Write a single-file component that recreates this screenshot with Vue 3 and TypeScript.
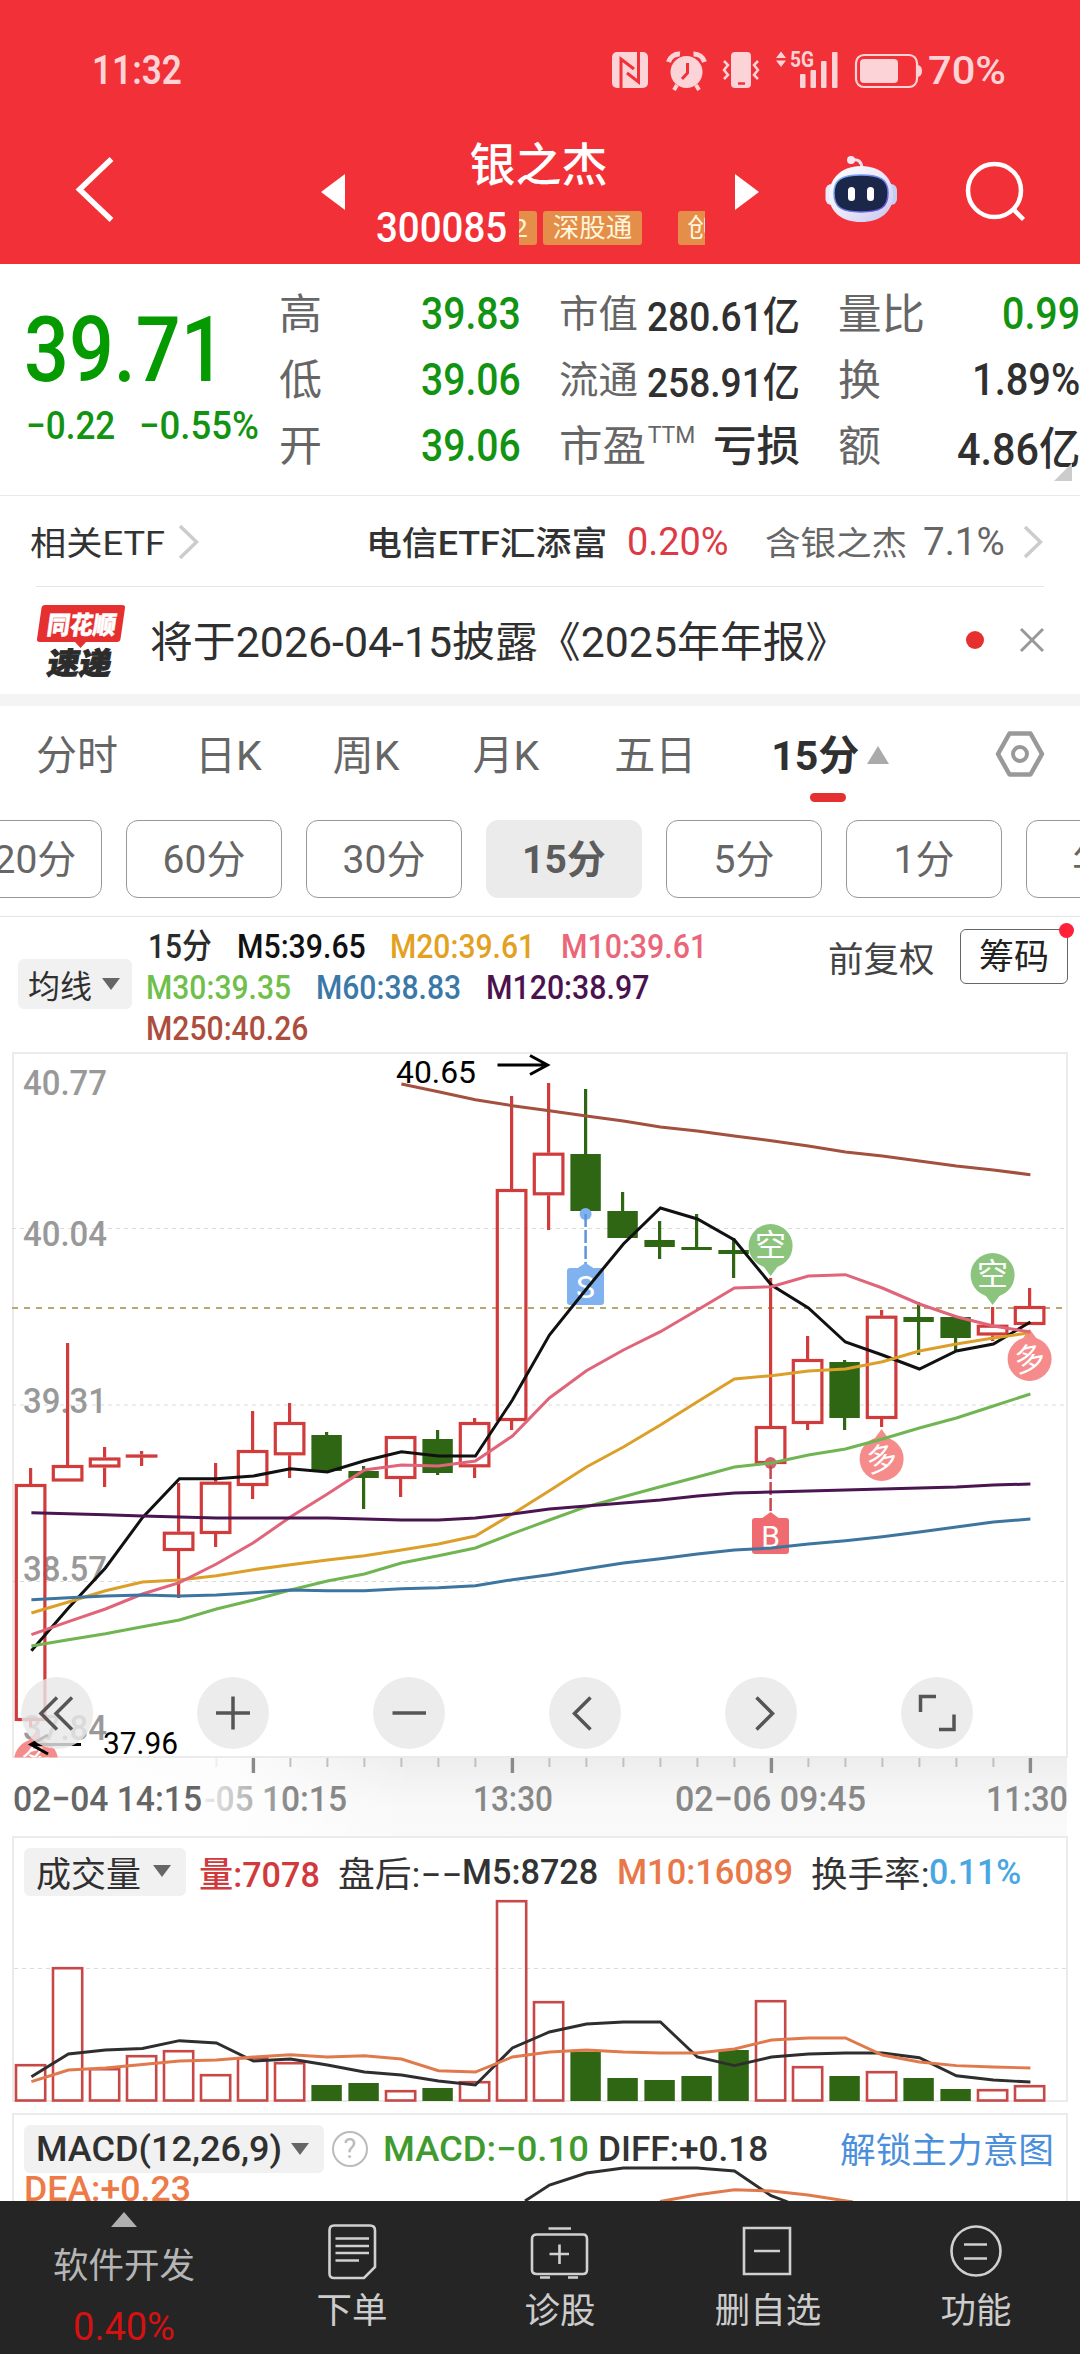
<script setup lang="ts">
import type { Directive } from 'vue'

const vFit: Directive<HTMLElement, number> = {
  mounted(el, binding) {
    const natural = el.offsetWidth
    if (!natural) return
    el.style.transformOrigin = 'left center'
    el.style.transform = `scaleX(${binding.value / natural})`
    el.style.marginRight = `${binding.value - natural}px`
  },
}

type Cell = { k: string; kw: number; sup?: string; v: string; vw: number; cls: string }
const stats: Cell[][] = [
  [
    { k: '高', kw: 43, v: '39.83', vw: 100, cls: 'green' },
    { k: '低', kw: 43, v: '39.06', vw: 100, cls: 'green' },
    { k: '开', kw: 43, v: '39.06', vw: 100, cls: 'green' },
  ],
  [
    { k: '市值', kw: 79, v: '280.61亿', vw: 153, cls: 'small' },
    { k: '流通', kw: 79, v: '258.91亿', vw: 153, cls: 'small' },
    { k: '市盈', kw: 87, sup: 'TTM', v: '亏损', vw: 87, cls: 'cn' },
  ],
  [
    { k: '量比', kw: 87, v: '0.99', vw: 78, cls: 'green' },
    { k: '换', kw: 43, v: '1.89%', vw: 108, cls: '' },
    { k: '额', kw: 43, v: '4.86亿', vw: 123, cls: '' },
  ],
]

const periods = ['120分', '60分', '30分', '15分', '5分', '1分', '年K']

type Legend = { t: string; w: number; c: string }
const legend: Legend[][] = [
  [
    { t: '15分', w: 64, c: '#2b2b2b' },
    { t: 'M5:39.65', w: 129, c: '#111' },
    { t: 'M20:39.61', w: 145, c: '#e3a11f' },
    { t: 'M10:39.61', w: 146, c: '#ea6678' },
  ],
  [
    { t: 'M30:39.35', w: 145, c: '#6fc04b' },
    { t: 'M60:38.83', w: 145, c: '#3a78a8' },
    { t: 'M120:38.97', w: 163, c: '#4a134f' },
  ],
  [{ t: 'M250:40.26', w: 162, c: '#ad4d3d' }],
]

const cx = (i: number): number => 30.6 + 37 * i

// up, high, body top, body bottom, low
type Candle = [boolean, number, number, number, number]
const candles: Candle[] = [
  [true, 1468, 1484, 1721, 1727], [true, 1343, 1465, 1481.5, 1481.5], [true, 1447, 1457.5, 1467.5, 1487],
  [true, 1451, 1454.5, 1457.5, 1466], [true, 1483, 1531.7, 1551, 1598], [true, 1463, 1481.7, 1534, 1547],
  [true, 1411, 1450, 1486, 1499], [true, 1403, 1422, 1455.3, 1478], [false, 1432, 1435, 1471, 1471],
  [false, 1466, 1471, 1478, 1509], [true, 1436, 1436, 1479, 1497], [false, 1430, 1439, 1473, 1475],
  [true, 1418, 1422, 1467.3, 1478], [true, 1096, 1189, 1421, 1430], [true, 1083, 1152.7, 1195.3, 1230],
  [false, 1089, 1154, 1211, 1214], [false, 1192, 1211, 1238, 1238], [false, 1221, 1240, 1247, 1259],
  [false, 1214, 1247, 1250, 1250], [false, 1238, 1250, 1254, 1278], [true, 1278, 1426, 1464, 1464],
  [true, 1336, 1359, 1424, 1430], [false, 1360, 1362, 1418, 1430], [true, 1310, 1315.7, 1419, 1427],
  [false, 1302, 1317, 1322, 1355], [false, 1317, 1317, 1338, 1351], [true, 1307, 1324.7, 1335.5, 1341],
  [true, 1288, 1306, 1325, 1325],
]

const line = (ys: number[], from = 0): string => ys.map((y, i) => `${cx(i + from) + 0.8},${y}`).join(' ')

const averages = [
  { c: '#a3503f', p: line([1084, 1091.7, 1099.7, 1105.7, 1110.7, 1116, 1121, 1127, 1131, 1136, 1140.7, 1146, 1152, 1156, 1161, 1166, 1170, 1174.7], 10) },
  { c: '#111', p: line([1650.7, 1608, 1568, 1517.7, 1478.7, 1478.7, 1476, 1468.7, 1472, 1460.7, 1451.7, 1456, 1456, 1400, 1335, 1289, 1244, 1208, 1219, 1240, 1285, 1308, 1342, 1355, 1369, 1351, 1344, 1322]) },
  { c: '#dc9f2a', p: line([1613, 1602, 1590.7, 1582, 1580, 1575.7, 1569.7, 1564.7, 1560, 1555.7, 1550, 1544, 1536, 1514, 1490.7, 1467, 1447, 1425, 1401.7, 1379, 1375.7, 1371, 1369, 1361.7, 1351, 1344, 1338, 1332.7]) },
  { c: '#e0647a', p: line([1634.7, 1621.7, 1609, 1594, 1582.7, 1564, 1542.7, 1517, 1494, 1470, 1465, 1466, 1461, 1436, 1398, 1370.7, 1350, 1331.7, 1310, 1288, 1286.7, 1276, 1274.7, 1288, 1304, 1316.7, 1326, 1332]) },
  { c: '#70b552', p: line([1646, 1639.7, 1633.7, 1626.7, 1620, 1609, 1600, 1590, 1581, 1574, 1563, 1555.7, 1548, 1533.7, 1520, 1506.7, 1496.7, 1486.7, 1477, 1467, 1463, 1455, 1449, 1439, 1428, 1418, 1406, 1394]) },
  { c: '#3d759f', p: line([1599.7, 1597.7, 1596, 1595, 1596, 1595, 1592.7, 1590, 1590.7, 1590.7, 1588.7, 1587.7, 1585.7, 1579.7, 1574.7, 1568.7, 1563, 1558.7, 1554, 1550, 1548, 1544, 1540.7, 1536.7, 1532, 1527, 1522, 1519]) },
  { c: '#4a1550', p: line([1512.7, 1513.7, 1514.7, 1516, 1517, 1518, 1518, 1518, 1518, 1519, 1520, 1520, 1518, 1514, 1509, 1506, 1503, 1500, 1496, 1493, 1492, 1491, 1490, 1489, 1488, 1487, 1485, 1484]) },
]

const priceLabels = [
  { t: '40.77', y: 1095 }, { t: '40.04', y: 1246 }, { t: '39.31', y: 1413 },
  { t: '38.57', y: 1581 }, { t: '37.84', y: 1740 },
]
const ticks = Array.from({ length: 23 }, (_, n) => n + 5)
const isMajor = (i: number): boolean => (i - 6) % 7 === 0
const timeLabels = [
  { t: '13:30', x: 473, w: 80 }, { t: '02−06 09:45', x: 675, w: 191 }, { t: '11:30', x: 986, w: 82 },
]

const volumes: number[] = [2064, 1967, 2068, 2055, 2050, 2074, 2057, 2062, 2085, 2083, 2090, 2088, 2081, 1900, 2001, 2051.6, 2078, 2080, 2076, 2050, 2000, 2066, 2076, 2071, 2078, 2089, 2089, 2085]
const volumeLines = [
  { c: '#2e2e2e', p: line([2076.8, 2054, 2050, 2048.5, 2040.7, 2043, 2061, 2059, 2065, 2072, 2075, 2081, 2085, 2048, 2032, 2024, 2022, 2022, 2057, 2065.6, 2057, 2054, 2053, 2053, 2057.7, 2075.8, 2080, 2082]) },
  { c: '#e07a4c', p: line([2081.6, 2070, 2068, 2064.5, 2061, 2060, 2057, 2054.7, 2057, 2055.7, 2059, 2070.7, 2072, 2057, 2052, 2050, 2052, 2053, 2053, 2049, 2040, 2038, 2038, 2055, 2062, 2065.6, 2067, 2068]) },
]
const buttons = [57.2, 233, 409, 585, 761, 937]
const shortMarks = [{ x: 770.6, y: 1246 }, { x: 992.6, y: 1275 }]
const longMarks = [{ x: 881.6, y: 1459 }, { x: 1029.6, y: 1359 }, { x: 36, y: 1761 }]
</script>

<template>
  <div class="page">
    <header class="top">
      <div class="status">
        <span class="clock" v-fit="90">11:32</span>
        <svg class="status-icons" viewBox="612 40 312 60" width="312" height="60" fill="#fcd3d6">
          <rect x="612" y="52" width="36" height="36" rx="5" />
          <path d="M621 88V59L634 69M638.500 52V82L627 73" fill="none" stroke="#f23038" stroke-width="3" />
          <circle cx="686.500" cy="72" r="16" />
          <path d="M668.500 62A11 11 0 0 1 680 54M693.500 54A11 11 0 0 1 704.500 62" fill="none" stroke="#fcd3d6" stroke-width="5" />
          <path d="M677 85l-3 5M696 85l3 5" stroke="#fcd3d6" stroke-width="4" />
          <path d="M687.500 63V73L682 79" fill="none" stroke="#f23038" stroke-width="3" />
          <rect x="731" y="52" width="20" height="36" rx="4" />
          <path d="M738 83.500h7" stroke="#f23038" stroke-width="2.500" />
          <path d="M724 61l4 4-4 5 4 5-4 4M758 61l-4 4 4 5-4 5 4 4" fill="none" stroke="#fcd3d6" stroke-width="2.500" />
          <path d="M776 58l5-6.500 5 6.500zM776 60.500h10l-5 6.500z" />
          <text x="790" y="67" font-size="22" font-weight="700" textLength="24" lengthAdjust="spacingAndGlyphs">5G</text>
          <rect x="800" y="74" width="5.500" height="14" rx="1" /><rect x="810.500" y="70" width="5.500" height="18" rx="1" />
          <rect x="821" y="61" width="5.500" height="27" rx="1" /><rect x="832" y="52" width="5.500" height="36" rx="1" />
          <rect x="856" y="55" width="61" height="32" rx="8" fill="none" stroke="#fcd3d6" stroke-width="2.200" />
          <rect x="860" y="59" width="38" height="24" rx="4" /><path d="M918 65q4 1 4 6t-4 6z" />
        </svg>
        <span class="battery" v-fit="78">70%</span>
      </div>
      <div class="nav">
        <svg viewBox="0 140 321 124" width="321" height="124"><path d="M111.500 159L79.500 189.500L111.500 220" fill="none" stroke="#fff" stroke-width="5.500" /></svg>
        <svg viewBox="321 140 24 124" width="24" height="124"><path d="M345 174V210L321 192z" fill="#fff" /></svg>
        <div class="title-block">
          <div class="title">银之杰</div>
          <div class="code-row">
            <span class="code" v-fit="131">300085</span>
            <div class="ticker">
              <span class="tag first">2</span><span class="tag">深股通</span><span class="tag last">创</span>
            </div>
          </div>
        </div>
        <svg viewBox="735 140 24 124" width="24" height="124"><path d="M735 174V210L759 192z" fill="#fff" /></svg>
        <svg viewBox="759 140 321 124" width="321" height="124">
          <defs>
            <linearGradient id="shell" x1="0" y1="0" x2="1" y2="1"><stop offset="0" stop-color="#fff" /><stop offset=".5" stop-color="#ece9fa" /><stop offset="1" stop-color="#c3c6ee" /></linearGradient>
            <linearGradient id="rim" x1="0" y1="0" x2="1" y2="1"><stop offset="0" stop-color="#77b6ff" /><stop offset="1" stop-color="#6a4bd8" /></linearGradient>
          </defs>
          <rect x="825.500" y="184" width="14" height="21" rx="6" fill="#e6eafc" /><rect x="883" y="184" width="14" height="21" rx="6" fill="#c5cdf2" />
          <path d="M852 160q9-2 10 8" fill="none" stroke="#f1dff0" stroke-width="3" /><circle cx="851" cy="160" r="4" fill="#f5e8f4" />
          <path d="M861 166C883 166 893 180 893 195C893 212 880 222 861 222C842 222 829 212 829 195C829 180 840 166 861 166z" fill="url(#shell)" />
          <path d="M861 175C881 175 888 180 888 193C888 207 881 212 861 212C841 212 834 207 834 193C834 180 841 175 861 175z" fill="#1b2748" stroke="url(#rim)" stroke-width="1.500" />
          <rect x="848" y="187" width="7" height="14" rx="3.500" fill="#fff" /><rect x="867" y="187" width="7" height="14" rx="3.500" fill="#fff" />
          <circle cx="994.500" cy="190.500" r="26.500" fill="none" stroke="#fff" stroke-width="4.500" />
          <path d="M1013 209L1023.500 219.500" stroke="#fff" stroke-width="4.500" />
        </svg>
      </div>
    </header>

    <section class="quote">
      <div class="price-block">
        <div class="price"><span v-fit="202">39.71</span></div>
        <div class="change"><span v-fit="89">−0.22</span><span v-fit="120">−0.55%</span></div>
      </div>
      <div v-for="(col, c) in stats" :key="c" class="stat-col">
        <div v-for="cell in col" :key="cell.k" class="stat">
          <span class="key" :class="{ sm: cell.kw === 79 }"><span v-fit="cell.kw">{{ cell.k }}</span><small v-if="cell.sup">{{ cell.sup }}</small></span>
          <span class="val" :class="cell.cls" v-fit="cell.vw">{{ cell.v }}</span>
        </div>
      </div>
      <i class="corner"></i>
    </section>

    <section class="etf">
      <span class="etf-a" v-fit="135">相关ETF</span>
      <svg width="24" height="40" viewBox="0 0 24 40"><path d="M3 4L19.500 20L3 36" fill="none" stroke="#ccc" stroke-width="3.500" /></svg>
      <span class="etf-b" v-fit="241">电信ETF汇添富</span>
      <span class="etf-c" v-fit="102">0.20%</span>
      <span class="etf-d" v-fit="142">含银之杰</span>
      <span class="etf-e" v-fit="82">7.1%</span>
      <svg width="24" height="40" viewBox="0 0 24 40"><path d="M3 5L18.500 20L3 35" fill="none" stroke="#ccc" stroke-width="3.500" /></svg>
    </section>

    <section class="news">
      <svg width="90" height="76" viewBox="36 602 90 76">
        <path d="M45 604H122Q125.500 604 125 607L120.500 638Q120 641 117 641H86L80.500 647L75 641H40Q36.500 641 37 638L41.500 607Q42 604 45 604z" fill="#e62f2f" />
        <g class="brand">
          <text transform="translate(46 632.500) skewX(-8)" font-size="25" fill="#fff" stroke="#fff" stroke-width=".5" textLength="69" lengthAdjust="spacingAndGlyphs">同花顺</text>
          <text transform="translate(46 672.500) skewX(-10)" font-size="30" fill="#2c2c2c" stroke="#2c2c2c" stroke-width="1" textLength="64" lengthAdjust="spacingAndGlyphs">速递</text>
        </g>
      </svg>
      <span class="headline" v-fit="698">将于2026-04-15披露《2025年年报》</span>
      <i class="dot"></i>
      <svg width="26" height="26" viewBox="0 0 26 26"><path d="M2 2L24 24M24 2L2 24" stroke="#999" stroke-width="3" /></svg>
    </section>

    <section class="tabs">
      <span>分时</span><span>日K</span><span>周K</span><span>月K</span><span>五日</span>
      <span class="on">15分<i class="tri-up"></i></span>
      <svg width="50" height="50" viewBox="995 729 50 50">
        <path d="M1009.500 733.500H1030.500L1042 754L1030.500 774.500H1009.500L998 754z" fill="none" stroke="#999" stroke-width="4.500" stroke-linejoin="round" />
        <circle cx="1020" cy="754" r="7" fill="none" stroke="#999" stroke-width="4" />
      </svg>
    </section>
    <section class="periods">
      <span v-for="p in periods" :key="p" class="pill" :class="{ active: p === '15分' }">{{ p }}</span>
    </section>

    <section class="legend">
      <span class="drop ma">均线<i class="tri"></i></span>
      <div class="legend-rows">
        <div v-for="(row, r) in legend" :key="r" class="legend-row">
          <span v-for="l in row" :key="l.t" v-fit="l.w" :style="{ color: l.c }">{{ l.t }}</span>
        </div>
      </div>
      <span class="adjust">前复权</span>
      <span class="chips">筹码<i></i></span>
    </section>

    <svg class="chart" viewBox="0 1052 1080 784" width="1080" height="784">
      <defs>
        <linearGradient id="axis" x1="0" y1="0" x2="0" y2="1"><stop offset="0" stop-color="#ededed" /><stop offset=".6" stop-color="#f8f8f8" /><stop offset="1" stop-color="#fafafa" /></linearGradient>
        <linearGradient id="veil" x1="0" y1="0" x2="1" y2="0"><stop offset="0" stop-color="#fff" /><stop offset=".55" stop-color="#fff" stop-opacity=".85" /><stop offset="1" stop-color="#fff" stop-opacity="0" /></linearGradient>
        <linearGradient id="fade" gradientUnits="userSpaceOnUse" x1="200" y1="0" x2="290" y2="0"><stop offset="0" stop-color="#f0f0f0" /><stop offset="1" stop-color="#888" /></linearGradient>
        <clipPath id="plot"><rect x="12" y="1052" width="1056" height="705.500" /></clipPath>
      </defs>
      <rect x="12" y="1757" width="1055" height="79" fill="url(#axis)" />
      <rect x="12" y="1757" width="400" height="79" fill="url(#veil)" />
      <rect x="13" y="1053" width="1054" height="704" fill="none" stroke="#ebebeb" stroke-width="2" />
      <path d="M12 1228.500H1066M12 1405H1066M12 1581.500H1066" stroke="#dcdcdc" stroke-width="1.200" stroke-dasharray="4 4" />
      <path d="M12 1308H1066" stroke="#b8a873" stroke-width="2" stroke-dasharray="6 6" />
      <g font-size="35.500" font-weight="500" fill="#999">
        <text v-for="l in priceLabels" :key="l.t" x="23" :y="l.y" textLength="84" lengthAdjust="spacingAndGlyphs">{{ l.t }}</text>
      </g>
      <path v-for="(k, i) in candles" :key="i" :d="`M${cx(i)} ${k[1]}V${k[2]}M${cx(i)} ${k[3]}V${k[4]}`" :stroke="k[0] ? '#d13b3b' : '#2f6613'" stroke-width="3.200" />
      <template v-for="(k, i) in candles" :key="i">
        <rect v-if="k[0]" :x="cx(i) - 14.300" :y="k[2] + 1.500" width="28.600" :height="Math.max(k[3] - k[2] - 3, 0.1)" fill="none" stroke="#d13b3b" stroke-width="3.200" />
        <rect v-else :x="cx(i) - 15.200" :y="k[2]" width="30.400" :height="k[3] - k[2]" fill="#2f6613" />
      </template>
      <g fill="#7fb2ef">
        <circle cx="585.600" cy="1214" r="6" /><path d="M585.600 1214V1266" stroke="#5c95dc" stroke-width="2.500" stroke-dasharray="13 3" />
        <path d="M576 1269L585.600 1263L595 1269z" /><rect x="567" y="1268" width="37" height="37" rx="3" />
        <text x="585.600" y="1298" text-anchor="middle" font-size="32" fill="#fff">S</text>
      </g>
      <g fill="#ef6b70">
        <circle cx="770.600" cy="1463" r="6" fill="#d8626a" /><path d="M770.600 1466V1516" stroke="#c9444c" stroke-width="2.500" stroke-dasharray="13 3" />
        <path d="M761 1519L770.600 1512L780 1519z" /><rect x="752" y="1518" width="37" height="36" rx="3" />
        <text x="770.600" y="1547" text-anchor="middle" font-size="30" fill="#fff">B</text>
      </g>
      <g clip-path="url(#plot)">
        <g v-for="m in shortMarks" :key="m.x" fill="#8cc47e">
          <circle :cx="m.x" :cy="m.y" r="22" /><path :d="`M${m.x - 9} ${m.y + 18}L${m.x} ${m.y + 30}L${m.x + 9} ${m.y + 18}z`" />
          <text :x="m.x" :y="m.y + 10" text-anchor="middle" font-size="31" fill="#fff">空</text>
        </g>
        <g v-for="m in longMarks" :key="m.x" fill="#f58b8b">
          <circle :cx="m.x" :cy="m.y" r="22" /><path :d="`M${m.x - 8} ${m.y - 19}L${m.x} ${m.y - 30}L${m.x + 8} ${m.y - 19}z`" />
          <text :transform="`translate(${m.x} ${m.y}) rotate(-12)`" y="11" text-anchor="middle" font-size="31" fill="#fff">多</text>
        </g>
      </g>
      <polyline v-for="a in averages" :key="a.c" :points="a.p" fill="none" :stroke="a.c" stroke-width="3" />
      <g font-size="31" fill="#000">
        <text x="396" y="1083" textLength="80" lengthAdjust="spacingAndGlyphs">40.65</text>
        <path d="M497.500 1065H547M530 1055.500L547.500 1065L530 1074.500" fill="none" stroke="#000" stroke-width="3" />
        <text x="103" y="1754" textLength="75" lengthAdjust="spacingAndGlyphs">37.96</text>
        <path d="M81 1744.500H31M48 1754L31 1744.500L48 1735" fill="none" stroke="#000" stroke-width="3" />
      </g>
      <circle v-for="x in buttons" :key="x" :cx="x" cy="1713" r="36" fill="#e8e8e8" fill-opacity=".82" />
      <path d="M57 1697.500L41 1713.500L57 1729.500M72 1697.500L56 1713.500L72 1729.500M216 1713H250M233 1696.500V1729.500M392.500 1713H426M590.500 1697.500L574.500 1713.500L590.500 1729.500M756.500 1697.500L772.500 1713.500L756.500 1729.500M936 1696.500H920.500V1712M939 1729.500H954V1714.500" fill="none" stroke="#555" stroke-width="3.500" />
      <rect v-for="i in ticks" :key="i" :x="cx(i) + 0.800 - (isMajor(i) ? 1.700 : 1)" y="1758" :width="isMajor(i) ? 3.400 : 2" :height="isMajor(i) ? 15 : 9" :fill="isMajor(i) ? '#8a8a8a' : i === 5 ? '#eee' : '#c0c0c0'" />
      <g font-size="35.500" font-weight="500">
        <text x="13" y="1811" fill="#666" textLength="189" lengthAdjust="spacingAndGlyphs">02−04 14:15</text>
        <text x="204" y="1811" fill="url(#fade)" textLength="143" lengthAdjust="spacingAndGlyphs">-05 10:15</text>
        <text v-for="l in timeLabels" :key="l.t" :x="l.x" y="1811" fill="#888" :textLength="l.w" lengthAdjust="spacingAndGlyphs">{{ l.t }}</text>
      </g>
    </svg>

    <section class="panel volume">
      <div class="panel-head">
        <span class="drop">成交量<i class="tri"></i></span>
        <span class="v-a" v-fit="121">量:7078</span>
        <span class="v-b" v-fit="125">盘后:−−</span>
        <span v-fit="136">M5:8728</span>
        <span class="v-c" v-fit="176">M10:16089</span>
        <span class="v-d" v-fit="118">换手率:</span>
        <span class="v-e" v-fit="92">0.11%</span>
      </div>
      <svg viewBox="14 1898 1052 202" width="1052" height="202">
        <path d="M14 1968.500H1066" stroke="#dcdcdc" stroke-width="1.200" stroke-dasharray="4 4" />
        <template v-for="(top, i) in volumes" :key="i">
          <rect v-if="candles[i][0]" :x="cx(i) - 14.600" :y="top + 1.200" width="29.200" :height="2099.300 - top" fill="none" stroke="#c84848" stroke-width="2.600" />
          <rect v-else :x="cx(i) - 15.200" :y="top" width="30.400" :height="2101 - top" fill="#2f6613" />
        </template>
        <polyline v-for="l in volumeLines" :key="l.c" :points="l.p" fill="none" :stroke="l.c" stroke-width="2.900" />
      </svg>
    </section>

    <section class="panel macd">
      <svg class="macd-lines" viewBox="14 2115 1052 86" width="1052" height="86">
        <path d="M525 2201L549.500 2185L586.500 2173L623.500 2168H697L734.500 2171L771 2195.700L788 2202" fill="none" stroke="#2e2e2e" stroke-width="2.900" />
        <path d="M660 2201.500L697.500 2194.700L734.500 2189.800L771.500 2191L808 2195L853 2202" fill="none" stroke="#e07a4c" stroke-width="2.900" />
      </svg>
      <div class="panel-head">
        <span class="drop"><span v-fit="246">MACD(12,26,9)</span><i class="tri"></i></span>
        <i class="help">?</i>
        <span class="m-a" v-fit="206">MACD:−0.10</span>
        <span class="m-b" v-fit="170">DIFF:+0.18</span>
        <span class="m-c" v-fit="214">解锁主力意图</span>
      </div>
      <div class="dea"><span v-fit="167">DEA:+0.23</span></div>
    </section>

    <footer class="bar">
      <div class="sector">
        <i class="tri-up light"></i>
        <span class="name">软件开发</span>
        <span class="pct">0.40%</span>
      </div>
      <div class="item">
        <svg width="60" height="60" viewBox="322 2221 60 60"><path d="M334 2225.500H370Q375 2225.500 375 2230.500V2267L364 2278H334Q329.500 2278 329.500 2273.500V2230.500Q329.500 2225.500 334 2225.500zM335.500 2238.500H369M335.500 2246H369M335.500 2253H369M335.500 2260.500H359" /></svg>
        <span>下单</span>
      </div>
      <div class="item">
        <svg width="60" height="60" viewBox="530 2221 60 60"><path d="M548.500 2228.500H571M537 2234.500H583Q587 2234.500 587 2239V2270Q587 2274 583 2274H537Q532 2274 532 2270V2239Q532 2234.500 537 2234.500zM549.500 2254H569M559.500 2244.500V2264M540 2277.500H550M568 2277.500H578" /></svg>
        <span>诊股</span>
      </div>
      <div class="item">
        <svg width="60" height="60" viewBox="738 2221 60 60"><path d="M744 2228H790V2274H744zM754 2251H780" /></svg>
        <span>删自选</span>
      </div>
      <div class="item">
        <svg width="60" height="60" viewBox="946 2221 60 60"><circle cx="976" cy="2251" r="24.500" /><path d="M964 2244.500H987M964 2258.500H987" /></svg>
        <span>功能</span>
      </div>
    </footer>
  </div>
</template>

<style>
body { background: #fff; }
</style>

<style scoped>
.page { width: 1080px; height: 2354px; overflow: hidden; display: flex; flex-direction: column; background: #fff; color: #333; font-family: Roboto, "Noto Sans CJK SC", sans-serif; }
.page > * { flex: none; box-sizing: border-box; }
span { display: inline-block; white-space: nowrap; flex: none; }
svg { display: block; flex: none; }
i { font-style: normal; }

.top { height: 264px; background: #f23038; color: #fff; }
.status { height: 140px; display: flex; align-items: center; color: #fcd3d6; font-weight: 500; }
.clock { margin-left: 92px; font-size: 41px; font-weight: 600; }
.status-icons { margin-left: 430px; }
.battery { margin-left: 4px; font-size: 39px; padding-top: 1px; }
.nav { height: 124px; display: flex; }
.title-block { width: 390px; }
.title { height: 48px; line-height: 50px; font-size: 46px; font-weight: 500; text-align: center; padding-right: 3px; }
.code-row { margin-top: 23px; height: 34px; display: flex; align-items: center; padding-left: 31px; }
.code { font-size: 42px; font-weight: 500; line-height: 36px; }
.ticker { margin-left: 12px; width: 186px; height: 34px; overflow: hidden; display: flex; }
.tag { box-sizing: border-box; height: 34px; line-height: 33px; padding: 0 9.500px; border-radius: 3px; background: #e48e4a; color: #fff6dc; font-size: 26.500px; }
.tag.first { width: 60px; margin-left: -42px; margin-right: 6px; text-align: right; }
.tag.last { margin-left: 36px; width: 90px; }

.quote { position: relative; height: 232px; border-bottom: 1.500px solid #e9e9e9; display: flex; gap: 38px; }
.price-block { width: 241px; padding: 50px 0 0 24px; box-sizing: border-box; color: #059a00; font-weight: 500; }
.price { font-size: 90px; line-height: 74px; }
.change { display: flex; gap: 24px; font-size: 39px; line-height: 40px; margin-top: 18px; padding-left: 2px; color: #129312; }
.stat-col { width: 242px; padding-top: 16px; }
.stat { height: 66px; display: flex; justify-content: space-between; align-items: center; }
.key { font-size: 42px; color: #666; display: flex; align-items: center; height: 66px; margin-top: -5px; }
.key.sm { font-size: 38px; }
.key small { font-size: 23px; margin: -15px 0 0 2px; }
.val { font-size: 45px; font-weight: 500; color: #303030; }
.val.small { font-size: 41px; }
.val.cn { font-size: 42px; margin-top: -5px; }
.val.green { color: #129312; }
.corner { position: absolute; right: 8px; bottom: 14px; border: 9px solid transparent; border-right-color: #ccc; border-bottom-color: #ccc; }

.etf { height: 91px; display: flex; align-items: center; font-size: 33px; padding: 0 0 0 30px; position: relative; }
.etf::after { content: ""; position: absolute; left: 36px; right: 36px; bottom: 0; height: 1px; background: #e6e6e6; }
.etf svg:first-of-type { margin-left: 12px; }
.etf-a, .etf-b, .etf-d { margin-top: -2px; }
.etf-b { margin-left: 165px; font-weight: 500; }
.etf-c { margin-left: 20px; font-size: 39px; color: #dc3a46; }
.etf-d { margin-left: 36px; color: #666; }
.etf-e { margin-left: 16px; font-size: 39px; color: #666; }
.etf svg:last-of-type { margin-left: 17px; }

.news { height: 119px; border-bottom: 12px solid #f4f4f4; display: flex; align-items: center; padding-left: 36px; }
.brand { font-weight: 900; font-family: "Noto Sans CJK SC", sans-serif; }
.headline { margin-left: 24px; margin-top: -5px; font-size: 42px; color: #303030; }
.dot { width: 18px; height: 18px; border-radius: 50%; background: #e62f2f; margin-left: 118px; margin-top: -1px; }
.news > svg:last-child { margin-left: 35px; margin-top: -2px; }

.tabs { height: 114px; display: flex; color: #666; font-size: 41px; line-height: 101px; padding-left: 36px; }
.tabs > span:nth-child(2) { margin-left: 77px; }
.tabs > span:nth-child(3) { margin-left: 71px; }
.tabs > span:nth-child(4) { margin-left: 73px; }
.tabs > span:nth-child(5) { margin-left: 75px; }
.tabs .on { position: relative; color: #303030; font-weight: 700; margin-left: 75px; width: 118px; display: flex; align-items: center; height: 101px; }
.tabs .on::after { content: ""; position: absolute; left: 39px; top: 87px; width: 36px; height: 9px; border-radius: 5px; background: #e62f2f; }
.tri-up { border: 11px solid transparent; border-bottom: 18px solid #aaa; border-top: 0; margin-left: 8px; margin-top: -4px; }
.tabs svg { margin: 23px 35px 0 auto; }
.periods { height: 97px; border-bottom: 1.500px solid #e6e6e6; display: flex; gap: 24px; margin-left: -54px; }
.pill { box-sizing: border-box; width: 156px; height: 78px; border: 1.500px solid #999; border-radius: 12px; text-align: center; line-height: 79px; font-size: 39px; color: #666; }
.pill.active { border-color: #ebebeb; background: #ebebeb; font-weight: 700; color: #5c5c5c; }

.legend { height: 135px; display: flex; align-items: flex-start; padding-left: 18px; }
.drop { height: 48px; box-sizing: border-box; border-radius: 6px; background: #f1f1f1; color: #303030; display: flex; align-items: center; justify-content: space-between; padding: 0 15px 2px 12px; font-size: 35px; font-weight: 400; }
.drop.ma { width: 114px; height: 50px; margin-top: 42px; padding: 0 12px 0 10px; font-size: 32px; }
.tri { border: 9.500px solid transparent; border-top: 12px solid #666; border-bottom: 0; }
.legend-rows { width: 683px; padding-left: 14px; padding-top: 9px; box-sizing: border-box; font-size: 34px; font-weight: 500; }
.legend-row { display: flex; gap: 25px; height: 41px; line-height: 41px; }
.legend-row:first-child { padding-left: 2px; }
.adjust { margin-top: 19px; margin-left: 13px; width: 132px; font-size: 35.500px; line-height: 48px; color: #444; }
.chips { position: relative; box-sizing: border-box; width: 108px; height: 55px; margin-top: 12px; border: 1.500px solid #666; border-radius: 6px; font-size: 35px; line-height: 56px; text-align: center; color: #222; }
.chips i { position: absolute; width: 15px; height: 15px; border-radius: 50%; background: #ff2139; right: -7px; top: -7px; }

.panel { position: relative; width: 1056px; margin-left: 12px; border: 2px solid #ebebeb; }
.panel svg { overflow: visible; }
.panel-head { display: flex; align-items: center; height: 48px; padding-left: 10px; font-size: 35px; font-weight: 500; }
.volume { height: 266px; }
.volume .panel-head { padding-top: 10px; padding-bottom: 2px; }
.volume .drop { width: 162px; }
.v-a { margin-left: 13px; margin-top: -2px; color: #d03a3c; }
.v-b { margin-left: 18px; margin-right: 5px; margin-top: -2px; font-weight: 400; }
.v-c { margin-left: 18px; color: #e8784a; }
.v-d { margin-left: 18px; margin-top: -2px; font-weight: 400; }
.v-e { color: #48a6e2; }
.macd { height: 88px; margin-top: 11px; border-bottom: 0; }
.macd-lines { position: absolute; left: 0; top: 0; }
.macd .panel-head { padding-top: 10px; position: relative; }
.macd .drop { width: 300px; padding-bottom: 0; font-weight: 500; }
.help { box-sizing: border-box; width: 36px; height: 36px; border: 2.500px solid #bbb; border-radius: 50%; margin-left: 8px; color: #bbb; font-size: 27px; line-height: 32px; text-align: center; font-weight: 400; }
.m-a { margin-left: 15px; color: #3f9b2f; }
.m-b { margin-left: 9px; }
.m-c { margin-left: 72px; margin-top: -3px; color: #4a8fdc; font-weight: 400; }
.dea { position: relative; padding-left: 10px; font-size: 35px; font-weight: 500; line-height: 33px; color: #ee7a47; height: 28px; overflow: hidden; }

.bar { position: relative; height: 153px; background: #252525; display: flex; color: #ccc; font-size: 35.500px; }
.sector { width: 248px; display: flex; flex-direction: column; align-items: center; color: #b5b5b5; }
.tri-up.light { margin: 11px 0 0; border-width: 0 13px 15px; border-bottom-color: #b0b0b0; }
.name { line-height: 44px; margin-top: 17px; }
.pct { font-size: 38px; line-height: 44px; color: #d51111; margin-top: 17px; }
.item { width: 208px; display: flex; flex-direction: column; align-items: center; padding-top: 20px; }
.item svg { fill: none; stroke: #d0d0d0; stroke-width: 2.600; }
.item span { line-height: 44px; margin-top: 8px; }
</style>
